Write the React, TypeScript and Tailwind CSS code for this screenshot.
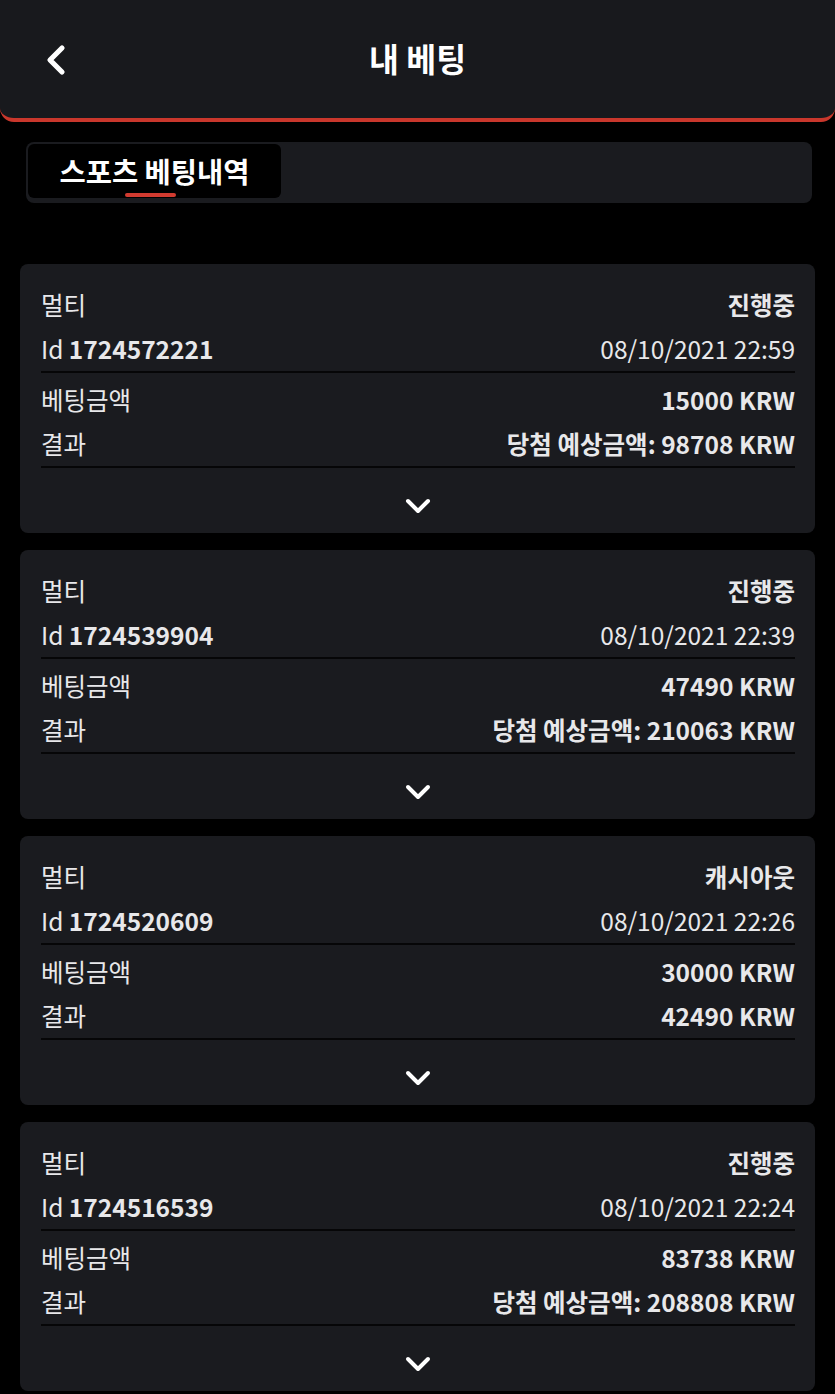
import { ChevronDown, ChevronLeft } from "lucide-react";

type Bet = {
  id: string;
  status: string;
  date: string;
  amount: string;
  result: string;
};

const bets: Bet[] = [
  { id: "1724572221", status: "진행중", date: "08/10/2021 22:59", amount: "15000 KRW", result: "당첨 예상금액: 98708 KRW" },
  { id: "1724539904", status: "진행중", date: "08/10/2021 22:39", amount: "47490 KRW", result: "당첨 예상금액: 210063 KRW" },
  { id: "1724520609", status: "캐시아웃", date: "08/10/2021 22:26", amount: "30000 KRW", result: "42490 KRW" },
  { id: "1724516539", status: "진행중", date: "08/10/2021 22:24", amount: "83738 KRW", result: "당첨 예상금액: 208808 KRW" },
];

const BetCard = ({ bet }: { bet: Bet }) => (
  <div className="rounded-lg bg-[#1a1b1f] pl-[21px] pr-[20px] pt-[19px]">
    <div className="flex h-[44px] items-center justify-between">
      <span>멀티</span>
      <span className="font-bold">{bet.status}</span>
    </div>
    <div className="flex h-[44px] items-center justify-between">
      <span>
        Id <span className="font-bold">{bet.id}</span>
      </span>
      <span>{bet.date}</span>
    </div>
    <div className="h-[2px] bg-[#060607]" />
    <div className="mt-[5px] flex h-[44px] items-center justify-between">
      <span>베팅금액</span>
      <span className="font-bold">{bet.amount}</span>
    </div>
    <div className="flex h-[44px] items-center justify-between">
      <span>결과</span>
      <span className="font-bold">{bet.result}</span>
    </div>
    <div className="h-[2px] bg-[#060607]" />
    <div className="flex h-[65px] items-center justify-center pt-[10px]">
      <ChevronDown size={40} strokeWidth={2.4} className="text-white" />
    </div>
  </div>
);

export default function App() {
  return (
    <div
      className="min-h-[1394px] w-full bg-black text-[24.5px] text-[#e8e8ea]"
      style={{ fontFamily: '"Noto Sans CJK KR", "Noto Sans", sans-serif' }}
    >
      <header className="relative flex h-[122px] items-center justify-center rounded-b-[14px] border-b-[4px] border-[#c9372c] bg-[#18191d]">
        <button className="absolute left-[32px] top-[36px] text-white">
          <ChevronLeft size={48} strokeWidth={2.6} />
        </button>
        <h1 className="-mt-[2px] text-[32.5px] font-bold text-white">내 베팅</h1>
      </header>

      <div className="ml-[26px] mr-[23px] mt-[20px] flex h-[61px] rounded-lg bg-[#1a1b1f] p-[2px]">
        <div className="relative flex h-[54px] w-[253px] items-center justify-center rounded-md bg-black">
          <span className="mt-[1px] text-[28.5px] font-bold text-white">스포츠 베팅내역</span>
          <span className="absolute bottom-[1px] left-[97px] h-[4px] w-[51px] rounded-full bg-[#d23b30]" />
        </div>
      </div>

      <div className="mx-[20px] mt-[61px] flex flex-col gap-[17px] pb-[2px]">
        {bets.map((bet) => (
          <BetCard key={bet.id} bet={bet} />
        ))}
      </div>
    </div>
  );
}
